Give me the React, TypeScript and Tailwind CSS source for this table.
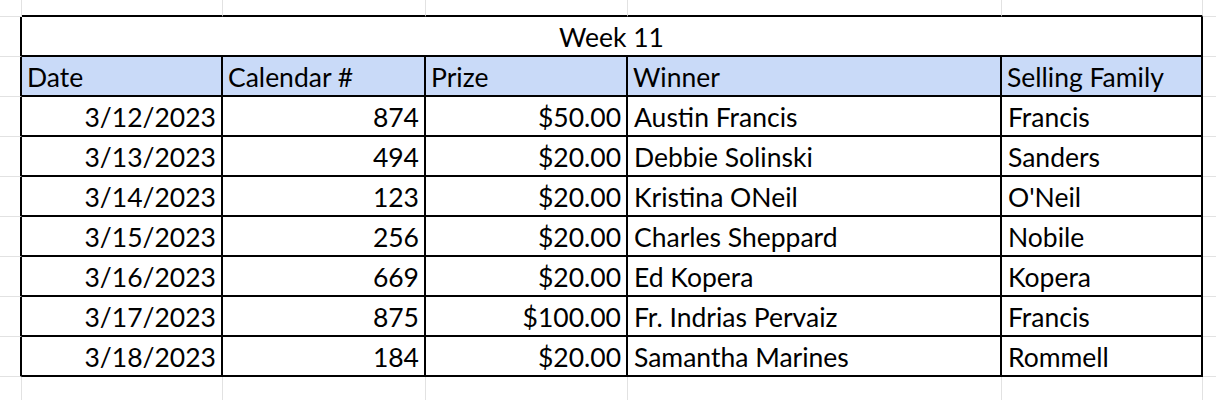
import React from "react";

const rows = [
  ["3/12/2023", "874", "$50.00", "Austin Francis", "Francis"],
  ["3/13/2023", "494", "$20.00", "Debbie Solinski", "Sanders"],
  ["3/14/2023", "123", "$20.00", "Kristina ONeil", "O'Neil"],
  ["3/15/2023", "256", "$20.00", "Charles Sheppard", "Nobile"],
  ["3/16/2023", "669", "$20.00", "Ed Kopera", "Kopera"],
  ["3/17/2023", "875", "$100.00", "Fr. Indrias Pervaiz", "Francis"],
  ["3/18/2023", "184", "$20.00", "Samantha Marines", "Rommell"],
];

const headers = ["Date", "Calendar #", "Prize", "Winner", "Selling Family"];

export default function App() {
  const gray = "border-[#e2e2e2]";
  return (
    <div
      className="w-[1216px] h-[400px] overflow-hidden bg-white text-black"
      style={{ fontFamily: "Lato, 'Open Sans', sans-serif" }}
    >
      <div className="grid grid-cols-[22px_201px_203px_202px_374px_201px_13px] grid-rows-[17px_repeat(9,40px)_23px] text-[26.5px] leading-none">
        {/* top row */}
        <div className={`border-r border-b ${gray}`} />
        {[0, 1, 2, 3, 4].map((i) => (
          <div key={i} className={`border-r ${gray} border-b-2 border-b-black`} />
        ))}
        <div className={`border-b ${gray}`} />

        {/* title row */}
        <div className={`border-b ${gray} border-r-2 border-r-black`} />
        <div className="col-span-5 border-r-2 border-b-2 border-black flex items-center justify-center pt-[3px]">
          Week 11
        </div>
        <div className={`border-b ${gray}`} />

        {/* header */}
        <div className={`border-b ${gray} border-r-2 border-r-black`} />
        {headers.map((h) => (
          <div key={h} className="bg-[#c9daf8] border-r-2 border-b-2 border-black flex items-center pl-[5px] pt-[3px] whitespace-nowrap">
            {h}
          </div>
        ))}
        <div className={`border-b ${gray}`} />

        {rows.map((r, ri) => (
          <React.Fragment key={ri}>
            <div className={`border-b ${gray} border-r-2 border-r-black`} />
            {r.map((c, ci) => (
              <div
                key={ci}
                className={`border-r-2 border-b-2 border-black flex items-center pt-[3px] whitespace-nowrap ${
                  ci < 3 ? "justify-end pr-[5px]" : "justify-start pl-[6px]"
                }`}
              >
                {c}
              </div>
            ))}
            <div className={`border-b ${gray}`} />
          </React.Fragment>
        ))}

        {/* bottom row */}
        {[0, 1, 2, 3, 4, 5].map((i) => (
          <div key={i} className={`border-r ${gray}`} />
        ))}
        <div />
      </div>
    </div>
  );
}
